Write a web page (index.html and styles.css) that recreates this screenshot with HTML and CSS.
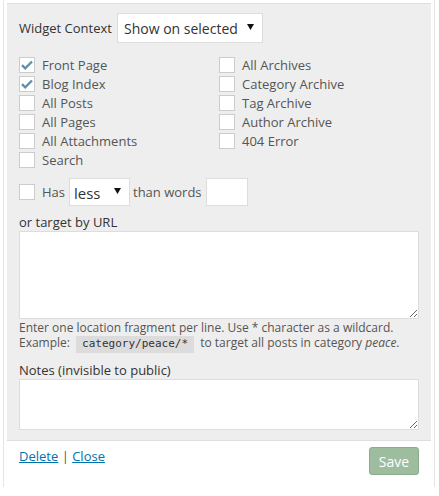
FILE: index.html
```html
<!DOCTYPE html>
<html>
<head>
<meta charset="utf-8">
<link rel="stylesheet" href="styles.css">
</head>
<body>
<div class="widget">
  <div class="panel">
    <div class="ctx-row">
      <span class="ctx-label">Widget Context</span>
      <span class="sel sel-main"><select><option>Show on selected</option></select><svg class="arrow" width="7" height="6" viewBox="0 0 7 6"><path d="M0 0H7L3.5 6Z" fill="#111"/></svg></span>
    </div>
    <div class="checks">
      <div class="col">
        <label class="chk"><span class="box on"><svg width="12" height="10" viewBox="0 0 12 10"><path d="M1 5.2L4.2 8.3L11 1.5" fill="none" stroke="#5f8faa" stroke-width="2.3"/></svg></span>Front Page</label>
        <label class="chk"><span class="box on"><svg width="12" height="10" viewBox="0 0 12 10"><path d="M1 5.2L4.2 8.3L11 1.5" fill="none" stroke="#5f8faa" stroke-width="2.3"/></svg></span>Blog Index</label>
        <label class="chk"><span class="box"></span>All Posts</label>
        <label class="chk"><span class="box"></span>All Pages</label>
        <label class="chk"><span class="box"></span>All Attachments</label>
        <label class="chk"><span class="box"></span>Search</label>
      </div>
      <div class="col">
        <label class="chk"><span class="box"></span>All Archives</label>
        <label class="chk"><span class="box"></span>Category Archive</label>
        <label class="chk"><span class="box"></span>Tag Archive</label>
        <label class="chk"><span class="box"></span>Author Archive</label>
        <label class="chk"><span class="box"></span>404 Error</label>
      </div>
    </div>
    <div class="has-row">
      <span class="box"></span>
      <span class="has">Has</span>
      <span class="sel sel-less"><select><option>less</option></select><svg class="arrow" width="7" height="6" viewBox="0 0 7 6"><path d="M0 0H7L3.5 6Z" fill="#111"/></svg></span>
      <span class="than">than words</span>
      <input class="words" type="text">
    </div>
    <div class="field-label url-label">or target by URL</div>
    <textarea class="ta ta-url"></textarea>
    <p class="help">Enter one location fragment per line. Use * character as a wildcard.<br>Example: <code>category/peace/*</code> to target all posts in category <em>peace</em>.</p>
    <div class="field-label notes-label">Notes (invisible to public)</div>
    <textarea class="ta ta-notes"></textarea>
  </div>
  <div class="actions">
    <div class="links"><a href="#">Delete</a> | <a href="#">Close</a></div>
    <button class="save">Save</button>
  </div>
</div>
</body>
</html>
```
FILE: styles.css
```css
html, body {
  margin: 0;
  padding: 0;
  background: #fff;
}
body {
  font-family: "Open Sans", "Liberation Sans", sans-serif;
  font-size: 13px;
  color: #444;
}
.widget {
  margin: 0 4px 0 3px;
  height: 487px;
  border-left: 1px solid #e5e5e5;
  border-right: 1px solid #e5e5e5;
  box-sizing: border-box;
  padding: 3px 3px 0 3px;
}
.panel {
  background: #eee;
  border-top: 1px solid #dedede;
  border-bottom: 1px solid #dedede;
  padding: 9px 12px 0 12px;
  height: 438px;
  box-sizing: border-box;
}
.ctx-row {
  display: flex;
  align-items: center;
  gap: 5px;
  height: 30px;
}
.ctx-label {
  color: #333;
}
.sel {
  position: relative;
  display: inline-flex;
}
.sel select {
  appearance: none;
  -webkit-appearance: none;
  background: #fff;
  border: 1px solid #ddd;
  border-radius: 0;
  font-family: "Open Sans", "Liberation Sans", sans-serif;
  color: #333;
  margin: 0;
  outline: none;
}
.sel .arrow {
  position: absolute;
  right: 9px;
  top: 50%;
  margin-top: -4px;
  pointer-events: none;
}
.sel-main select {
  width: 146px;
  height: 30px;
  font-size: 14px;
  padding: 0 24px 0 6px;
}
.checks {
  display: flex;
  margin-top: 12px;
}
.col {
  display: flex;
  flex-direction: column;
  width: 200px;
}
.chk {
  display: flex;
  align-items: center;
  height: 19px;
  color: #555;
}
.box {
  width: 16px;
  height: 16px;
  box-sizing: border-box;
  border: 1px solid #ccc;
  background: #fff;
  margin-right: 7px;
  display: inline-flex;
  align-items: center;
  justify-content: center;
  flex: none;
}
.box svg {
  display: block;
}
.has-row {
  display: flex;
  align-items: center;
  margin-top: 9px;
  height: 28px;
  color: #555;
}
.has {
  margin-right: 4px;
}
.sel-less select {
  width: 61px;
  height: 28px;
  font-size: 15px;
  padding: 2px 0 0 4px;
}
.than {
  margin: 0 4px 0 3px;
}
.words {
  width: 42px;
  height: 28px;
  box-sizing: border-box;
  border: 1px solid #ddd;
  background: #fff;
  margin: 0;
  padding: 0;
}
.field-label {
  color: #333;
  line-height: 18px;
}
.url-label {
  margin-top: 7px;
}
.ta {
  display: block;
  width: 100%;
  box-sizing: border-box;
  border: 1px solid #ddd;
  background: #fff;
  margin: 0;
  resize: vertical;
  font-family: inherit;
}
.ta-url {
  height: 88px;
}
.help {
  margin: 1px 0 0 0;
  font-size: 12px;
  line-height: 15px;
  color: #555;
}
.help code {
  font-family: "DejaVu Sans Mono", "Liberation Mono", monospace;
  font-size: 11px;
  background: #dcdcdc;
  padding: 1px 6px 3px;
  margin: 0 3px;
  color: #333;
}
.help em {
  font-style: italic;
}
.notes-label {
  margin-top: 10px;
}
.ta-notes {
  height: 51px;
}
.actions {
  display: flex;
  justify-content: space-between;
  align-items: flex-start;
  padding: 6px 12px 0 12px;
}
.links {
  color: #555;
  line-height: 18px;
}
.links a {
  color: #0073aa;
  text-decoration: underline;
}
.save {
  width: 50px;
  height: 28px;
  background: #9ebd9f;
  border: 1px solid #8aab8c;
  border-radius: 3px;
  color: #fff;
  font-family: "Open Sans", "Liberation Sans", sans-serif;
  font-size: 14px;
  padding: 0;
}
```
